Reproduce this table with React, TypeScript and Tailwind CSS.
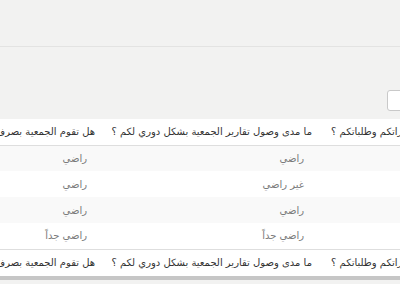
import React from 'react';

const headers = [
  'هل يتم الرد على استفساراتكم وطلباتكم ؟',
  'ما مدى وصول تقارير الجمعية بشكل دوري لكم ؟',
  'هل تقوم الجمعية بصرف المساعدات في وقتها ؟',
];

const rows = [
  ['راضي', 'راضي', 'راضي'],
  ['راضي', 'غير راضي', 'راضي'],
  ['راضي', 'راضي', 'راضي'],
  ['راضي جداً', 'راضي جداً', 'راضي جداً'],
];

const HeadRow = ({ top }: { top?: boolean }) => (
  <tr
    className={
      top
        ? 'h-[26px] border-b border-[#dedede] text-[#333]'
        : 'h-[26px] border-t border-[#dedede] text-[#333]'
    }
  >
    {headers.map((h, j) => (
      <th
        key={h}
        className={
          j === 0
            ? 'w-[217px] pl-[9px] text-left font-normal whitespace-nowrap overflow-hidden'
            : 'w-[217px] pr-[10px] text-right font-normal whitespace-nowrap'
        }
      >
        {h}
      </th>
    ))}
  </tr>
);

const App = () => {
  return (
    <div
      dir="rtl"
      className="w-[400px] h-[284px] overflow-hidden bg-[#f2f2f1] font-['DejaVu_Sans',sans-serif]"
    >
      {/* top bar */}
      <div className="h-[47px] border-b border-[#e3e3e2]" />

      {/* search field */}
      <div className="h-[72px] pt-[43px] -mr-[147px]">
        <input
          type="text"
          className="block w-[160px] h-[21px] bg-white border border-[#c9c9c9] rounded-[3px] outline-none"
        />
      </div>

      {/* results table */}
      <div className="-mr-[139px] w-[760px] bg-white">
        <table className="border-collapse table-fixed w-[651px] text-[10px]">
          <thead>
            <HeadRow top />
          </thead>
          <tbody className="text-[#7a7a7a]">
            {rows.map((r, i) => (
              <tr key={i} className={i % 2 === 0 ? 'h-[26px] bg-[#f9f9f9]' : 'h-[26px] bg-white'}>
                {r.map((c, j) => (
                  <td key={j} className="pr-[18px] text-right whitespace-nowrap">
                    {c}
                  </td>
                ))}
              </tr>
            ))}
          </tbody>
          <tfoot>
            <HeadRow />
          </tfoot>
        </table>
      </div>

      {/* horizontal scroll bar */}
      <div className="h-[1px] bg-white" />
      <div className="h-[4px] bg-[#c6c6c6]" />
    </div>
  );
};

export default App;
